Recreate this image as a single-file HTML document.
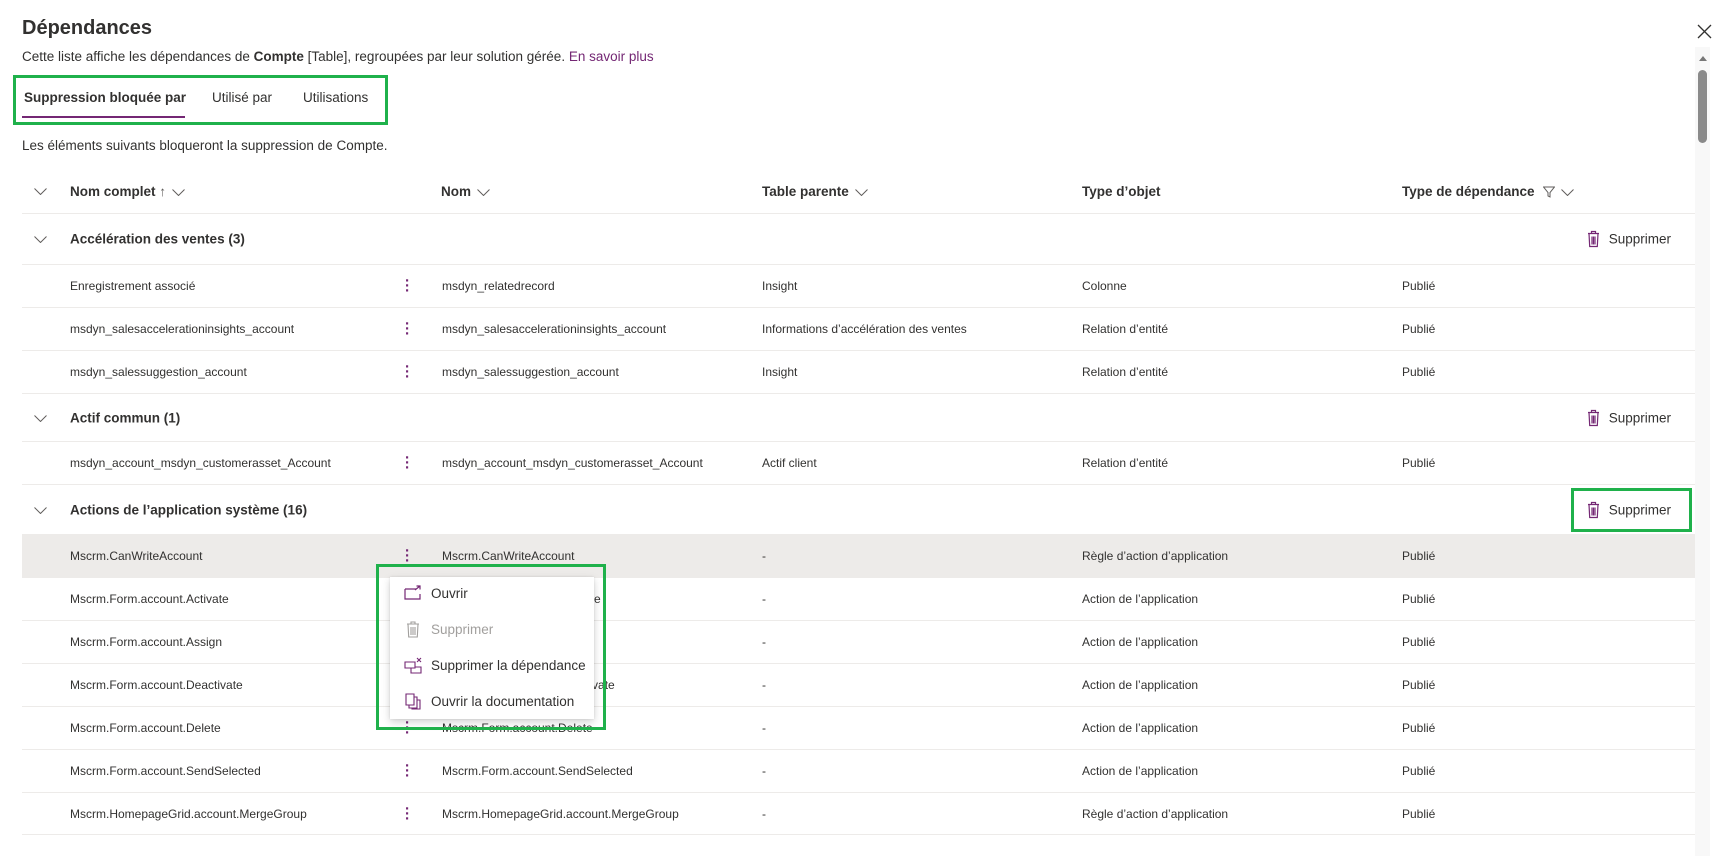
<!DOCTYPE html>
<html><head><meta charset="utf-8"><style>
*{margin:0;padding:0;box-sizing:border-box}
body{width:1724px;height:856px;overflow:hidden;background:#fff;font-family:"Liberation Sans",sans-serif;color:#323130;position:relative}
.a{position:absolute;white-space:nowrap}
.row{position:absolute;left:22px;width:1673px;height:43px;border-top:1px solid #edebe9;font-size:12px}
.row span{position:absolute;top:50%;transform:translateY(-50%)}
.grp{position:absolute;left:22px;width:1673px;border-top:1px solid #edebe9;font-size:13.5px;font-weight:bold}
.grp span{position:absolute;top:50%;transform:translateY(-50%)}
.grp svg.cv{position:absolute;left:12px;top:50%;margin-top:-3px}
.dots{color:#742774;font-weight:bold;font-size:15px;left:383px;line-height:5px;top:50%!important}
.del{position:absolute;right:24px;top:50%;transform:translateY(-50%);font-weight:normal;font-size:13.5px;display:flex;align-items:center;gap:9px}
.mi{position:absolute;left:14px;font-size:13.5px;display:flex;align-items:center;gap:9px}
.hc{display:inline-block;vertical-align:middle;margin-left:6px}
</style></head><body>
<div class="a" style="left:22px;top:17px;font-size:20px;font-weight:bold;color:#323130">Dépendances</div>
<div class="a" style="left:22px;top:49px;font-size:13.5px">Cette liste affiche les dépendances de <b>Compte</b> [Table], regroupées par leur solution gérée. <span style="color:#742774">En savoir plus</span></div>
<svg class="a" style="left:1697px;top:24px" width="15" height="15"><path d="M1 1L14 14M14 1L1 14" stroke="#323130" stroke-width="1.3"/></svg>
<div class="a" style="left:13px;top:75px;width:375px;height:50px;border:3px solid #1fb14b"></div>
<div class="a" style="left:24px;top:90px;font-size:13.5px;font-weight:bold">Suppression bloquée par</div>
<div class="a" style="left:22px;top:116px;width:163px;height:2px;background:#742774"></div>
<div class="a" style="left:212px;top:90px;font-size:13.5px">Utilisé par</div>
<div class="a" style="left:303px;top:90px;font-size:13.5px">Utilisations</div>
<div class="a" style="left:22px;top:138px;font-size:13.5px">Les éléments suivants bloqueront la suppression de Compte.</div>
<!-- header -->
<div class="a" style="left:22px;top:168px;width:1673px;height:46px;border-bottom:1px solid #edebe9;font-size:13.5px;font-weight:bold">
<svg class="a" style="left:12px;top:20px" width="13" height="7"><path d="M.5.5l6 6 6-6" fill="none" stroke="#605e5c"/></svg>
<span class="a" style="left:48px;top:16px">Nom complet <span style="font-weight:normal;color:#605e5c">↑</span><svg class="hc" width="13" height="7"><path d="M.5.5l6 6 6-6" fill="none" stroke="#605e5c"/></svg></span>
<span class="a" style="left:419px;top:16px">Nom<svg class="hc" width="13" height="7"><path d="M.5.5l6 6 6-6" fill="none" stroke="#605e5c"/></svg></span>
<span class="a" style="left:740px;top:16px">Table parente<svg class="hc" width="13" height="7"><path d="M.5.5l6 6 6-6" fill="none" stroke="#605e5c"/></svg></span>
<span class="a" style="left:1060px;top:16px">Type d’objet</span>
<span class="a" style="left:1380px;top:16px">Type de dépendance<svg class="hc" width="12" height="12" style="margin-left:8px"><path d="M.5 1h11L7 6.5V11L5 10V6.5z" fill="none" stroke="#605e5c"/></svg><svg class="hc" width="13" height="7"><path d="M.5.5l6 6 6-6" fill="none" stroke="#605e5c"/></svg></span>
</div>
<!-- groups -->
<div class="grp" style="top:214px;height:50px;border-top:none"><svg class="cv" width="13" height="7"><path d="M.5.5l6 6 6-6" fill="none" stroke="#605e5c"/></svg><span style="left:48px">Accélération des ventes (3)</span><div class="del"><svg width="13" height="17"><path d="M1 3h11M4.5 3V1h4v2M2 3l.7 13h7.6L11 3M5 6v8M6.5 6v8M8 6v8" fill="none" stroke="#742774" stroke-width="1.2"/></svg>Supprimer</div></div>
<div class="grp" style="top:393px;height:48px"><svg class="cv" width="13" height="7"><path d="M.5.5l6 6 6-6" fill="none" stroke="#605e5c"/></svg><span style="left:48px">Actif commun (1)</span><div class="del"><svg width="13" height="17"><path d="M1 3h11M4.5 3V1h4v2M2 3l.7 13h7.6L11 3M5 6v8M6.5 6v8M8 6v8" fill="none" stroke="#742774" stroke-width="1.2"/></svg>Supprimer</div></div>
<div class="grp" style="top:484px;height:50px"><svg class="cv" width="13" height="7"><path d="M.5.5l6 6 6-6" fill="none" stroke="#605e5c"/></svg><span style="left:48px">Actions de l’application système (16)</span><div class="del"><svg width="13" height="17"><path d="M1 3h11M4.5 3V1h4v2M2 3l.7 13h7.6L11 3M5 6v8M6.5 6v8M8 6v8" fill="none" stroke="#742774" stroke-width="1.2"/></svg>Supprimer</div></div>
<div class="a" style="left:1571px;top:488px;width:121px;height:44px;border:3px solid #1fb14b"></div>
<!-- rows -->
<div class="row" style="top:264px"><span style="left:48px">Enregistrement associé</span><span class="dots">·<br>·<br>·</span><span style="left:420px">msdyn_relatedrecord</span><span style="left:740px">Insight</span><span style="left:1060px">Colonne</span><span style="left:1380px">Publié</span></div>
<div class="row" style="top:307px"><span style="left:48px">msdyn_salesaccelerationinsights_account</span><span class="dots">·<br>·<br>·</span><span style="left:420px">msdyn_salesaccelerationinsights_account</span><span style="left:740px">Informations d’accélération des ventes</span><span style="left:1060px">Relation d’entité</span><span style="left:1380px">Publié</span></div>
<div class="row" style="top:350px"><span style="left:48px">msdyn_salessuggestion_account</span><span class="dots">·<br>·<br>·</span><span style="left:420px">msdyn_salessuggestion_account</span><span style="left:740px">Insight</span><span style="left:1060px">Relation d’entité</span><span style="left:1380px">Publié</span></div>
<div class="row" style="top:441px"><span style="left:48px">msdyn_account_msdyn_customerasset_Account</span><span class="dots">·<br>·<br>·</span><span style="left:420px">msdyn_account_msdyn_customerasset_Account</span><span style="left:740px">Actif client</span><span style="left:1060px">Relation d’entité</span><span style="left:1380px">Publié</span></div>
<div class="row" style="top:534px;background:#edebe9"><span style="left:48px">Mscrm.CanWriteAccount</span><span class="dots">·<br>·<br>·</span><span style="left:420px">Mscrm.CanWriteAccount</span><span style="left:740px">-</span><span style="left:1060px">Règle d’action d’application</span><span style="left:1380px">Publié</span></div>
<div class="row" style="top:577px"><span style="left:48px">Mscrm.Form.account.Activate</span><span class="dots">·<br>·<br>·</span><span style="left:420px">Mscrm.Form.account.Activate</span><span style="left:740px">-</span><span style="left:1060px">Action de l’application</span><span style="left:1380px">Publié</span></div>
<div class="row" style="top:620px"><span style="left:48px">Mscrm.Form.account.Assign</span><span class="dots">·<br>·<br>·</span><span style="left:420px">Mscrm.Form.account.Assign</span><span style="left:740px">-</span><span style="left:1060px">Action de l’application</span><span style="left:1380px">Publié</span></div>
<div class="row" style="top:663px"><span style="left:48px">Mscrm.Form.account.Deactivate</span><span class="dots">·<br>·<br>·</span><span style="left:420px">Mscrm.Form.account.Deactivate</span><span style="left:740px">-</span><span style="left:1060px">Action de l’application</span><span style="left:1380px">Publié</span></div>
<div class="row" style="top:706px"><span style="left:48px">Mscrm.Form.account.Delete</span><span class="dots">·<br>·<br>·</span><span style="left:420px">Mscrm.Form.account.Delete</span><span style="left:740px">-</span><span style="left:1060px">Action de l’application</span><span style="left:1380px">Publié</span></div>
<div class="row" style="top:749px"><span style="left:48px">Mscrm.Form.account.SendSelected</span><span class="dots">·<br>·<br>·</span><span style="left:420px">Mscrm.Form.account.SendSelected</span><span style="left:740px">-</span><span style="left:1060px">Action de l’application</span><span style="left:1380px">Publié</span></div>
<div class="row" style="top:792px;border-bottom:1px solid #edebe9"><span style="left:48px">Mscrm.HomepageGrid.account.MergeGroup</span><span class="dots">·<br>·<br>·</span><span style="left:420px">Mscrm.HomepageGrid.account.MergeGroup</span><span style="left:740px">-</span><span style="left:1060px">Règle d’action d’application</span><span style="left:1380px">Publié</span></div>
<!-- menu -->
<div class="a" style="left:390px;top:577px;width:204px;height:142px;background:#fff;box-shadow:0 3px 8px rgba(0,0,0,.18),0 0 2px rgba(0,0,0,.1)">
<div class="mi" style="top:8px"><svg width="18" height="16"><path d="M1 4h11M1 4v10h15V9M11 5l5-4M12.5 1H16v3.5" fill="none" stroke="#742774" stroke-width="1.2"/></svg>Ouvrir</div>
<div class="mi" style="top:44px;color:#a19f9d"><svg width="18" height="17"><path d="M3 3h12M7 3V1h4v2M4 3l.7 13h8.6L14 3M7 6v8M9 6v8M11 6v8" fill="none" stroke="#a19f9d" stroke-width="1.1"/></svg>Supprimer</div>
<div class="mi" style="top:80px"><svg width="18" height="17"><path d="M1 5h10v6H1zM7 11v5h10v-6h-6M13 1l4 4M17 1l-4 4" fill="none" stroke="#742774" stroke-width="1.1"/></svg>Supprimer la dépendance</div>
<div class="mi" style="top:116px"><svg width="18" height="17"><path d="M2 1h8v11H2zM5 12v3h8V4h-3M8 15v1h8V7h-3" fill="none" stroke="#742774" stroke-width="1.1"/></svg>Ouvrir la documentation</div>
</div>
<div class="a" style="left:376px;top:564px;width:230px;height:166px;border:3px solid #1fb14b"></div>
<!-- scrollbar -->
<div class="a" style="left:1695px;top:47px;width:15px;height:809px;background:#f8f8f8"></div>
<div class="a" style="left:1699px;top:56px;width:0;height:0;border-left:4px solid transparent;border-right:4px solid transparent;border-bottom:5px solid #777"></div>
<div class="a" style="left:1698px;top:70px;width:9px;height:73px;background:#8a8a8a;border-radius:5px"></div>
</body></html>
